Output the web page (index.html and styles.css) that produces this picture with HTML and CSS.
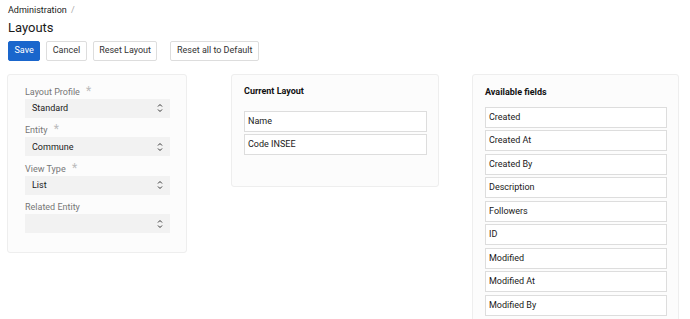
FILE: index.html
```html
<!DOCTYPE html>
<html>
<head>
<title>Layouts</title>
<link rel="stylesheet" href="styles.css">
</head>
<body>
<div class="page">
<div class="breadcrumb">Administration <span class="sep">/</span></div>
<h1 class="title">Layouts</h1>

<div class="buttons">
<button class="btn primary">Save</button>
<button class="btn">Cancel</button>
<button class="btn">Reset Layout</button>
<button class="btn wide-gap">Reset all to Default</button>
</div>

<div class="panels">
<div class="panel side">
  <div class="field">
    <div class="label">Layout Profile <span class="req">*</span></div>
    <div class="select">Standard<svg class="chev" width="6" height="10" viewBox="0 0 6 10"><path d="M1 3.5 L3 1.5 L5 3.5 M1 6.5 L3 8.5 L5 6.5" fill="none" stroke="#333" stroke-width="1"/></svg></div>
  </div>
  <div class="field">
    <div class="label">Entity <span class="req">*</span></div>
    <div class="select">Commune<svg class="chev" width="6" height="10" viewBox="0 0 6 10"><path d="M1 3.5 L3 1.5 L5 3.5 M1 6.5 L3 8.5 L5 6.5" fill="none" stroke="#333" stroke-width="1"/></svg></div>
  </div>
  <div class="field">
    <div class="label">View Type <span class="req">*</span></div>
    <div class="select">List<svg class="chev" width="6" height="10" viewBox="0 0 6 10"><path d="M1 3.5 L3 1.5 L5 3.5 M1 6.5 L3 8.5 L5 6.5" fill="none" stroke="#333" stroke-width="1"/></svg></div>
  </div>
  <div class="field">
    <div class="label">Related Entity</div>
    <div class="select"><svg class="chev" width="6" height="10" viewBox="0 0 6 10"><path d="M1 3.5 L3 1.5 L5 3.5 M1 6.5 L3 8.5 L5 6.5" fill="none" stroke="#333" stroke-width="1"/></svg></div>
  </div>
</div>

<div class="panel current">
  <div class="panel-title">Current Layout</div>
  <ul class="items">
    <li>Name</li>
    <li>Code INSEE</li>
  </ul>
</div>

<div class="panel available">
  <div class="panel-title">Available fields</div>
  <ul class="items">
    <li>Created</li>
    <li>Created At</li>
    <li>Created By</li>
    <li>Description</li>
    <li>Followers</li>
    <li>ID</li>
    <li>Modified</li>
    <li>Modified At</li>
    <li>Modified By</li>
  </ul>
</div>
</div>
</div>
</body>
</html>
```

FILE: styles.css
```css
/* Layout manager page */

html, body
{ margin: 0;
height: 100%;
overflow: hidden;
background-color: white;
}

body
{ font-family: Roboto, "Liberation Sans", Arial, sans-serif;
font-size: 9px;
color: #1a1a1a;
}

div.page
{ padding: 3.5px 8px 0 8px;
}

div.breadcrumb
{ line-height: 13px;
}

span.sep
{ color: #aaa;
margin-left: 2px;
}

h1.title
{ margin: 2px 0 0 0;
font-size: 13px;
font-weight: normal;
line-height: 17px;
}

div.buttons
{ display: flex;
gap: 6px;
margin-top: 5.5px;
}

button.btn
{ font-family: inherit;
font-size: 9px;
line-height: 17.5px;
padding: 0 5.5px;
border: 1px solid #ddd;
border-radius: 2px;
background-color: white;
color: #333;
}

button.primary
{ background-color: #1a66cc;
border-color: #1a66cc;
color: white;
}

button.wide-gap
{ margin-left: 7px;
}

div.panels
{ display: flex;
align-items: flex-start;
margin-top: 13px;
margin-left: -1px;
}

div.panel
{ box-sizing: border-box;
background-color: #fcfcfc;
border: 1px solid #eee;
border-radius: 3px;
}

div.side
{ width: 180px;
padding: 11px 16px 12px 17px;
}

div.current
{ width: 208px;
margin-left: 44px;
padding: 10px 11px 28px 12px;
}

div.available
{ width: 207px;
margin-left: 33px;
padding: 11px 11px 20px 12px;
}

div.field
{ margin-bottom: 6.5px;
}

div.label
{ height: 13px;
line-height: 13px;
color: #777;
}

span.req
{ display: inline-block;
height: 0;
line-height: 0;
vertical-align: top;
color: #bbb;
font-size: 12px;
position: relative;
top: 5px;
margin-left: 4px;
}

div.select
{ display: flex;
align-items: center;
height: 19px;
padding: 0 7px 0 7px;
background-color: #f2f2f2;
color: #1a1a1a;
}

svg.chev
{ margin-left: auto;
}

div.panel-title
{ font-weight: bold;
line-height: 13px;
color: #111;
}

ul.items
{ list-style: none;
margin: 0;
padding: 0;
}

div.current ul.items
{ margin-top: 13px;
}

div.available ul.items
{ margin-top: 8px;
}

ul.items li
{ height: 19px;
line-height: 19px;
padding: 0 3px;
border: 1px solid #ddd;
background-color: white;
margin-bottom: 2.5px;
}
```
